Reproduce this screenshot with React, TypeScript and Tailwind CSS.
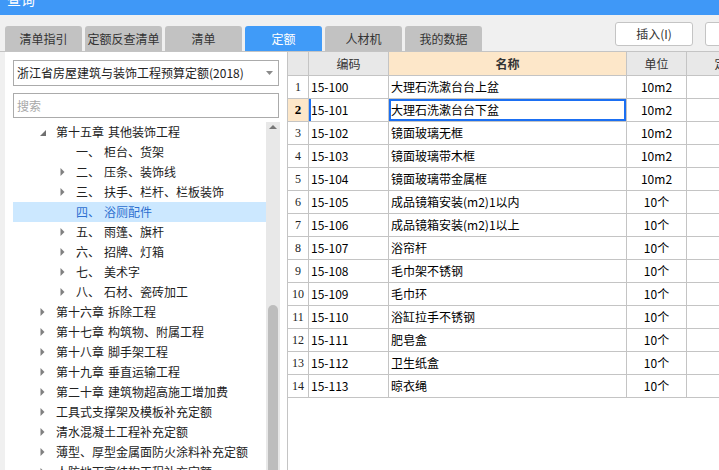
import React from 'react';

type Arrow = 'open' | 'closed' | 'none';

interface TreeItem {
  level: number;
  arrow: Arrow;
  head: string;
  tail?: string;
  selected?: boolean;
}

interface QuotaRow {
  code: string;
  name: string;
  unit: string;
}

const tabs = ['清单指引', '定额反查清单', '清单', '定额', '人材机', '我的数据'];

const tree: TreeItem[] = [
  { level: 0, arrow: 'open', head: '第十五章', tail: '其他装饰工程' },
  { level: 1, arrow: 'none', head: '一、', tail: '柜台、货架' },
  { level: 1, arrow: 'closed', head: '二、', tail: '压条、装饰线' },
  { level: 1, arrow: 'closed', head: '三、', tail: '扶手、栏杆、栏板装饰' },
  { level: 1, arrow: 'none', head: '四、', tail: '浴厕配件', selected: true },
  { level: 1, arrow: 'closed', head: '五、', tail: '雨篷、旗杆' },
  { level: 1, arrow: 'closed', head: '六、', tail: '招牌、灯箱' },
  { level: 1, arrow: 'closed', head: '七、', tail: '美术字' },
  { level: 1, arrow: 'closed', head: '八、', tail: '石材、瓷砖加工' },
  { level: 0, arrow: 'closed', head: '第十六章', tail: '拆除工程' },
  { level: 0, arrow: 'closed', head: '第十七章', tail: '构筑物、附属工程' },
  { level: 0, arrow: 'closed', head: '第十八章', tail: '脚手架工程' },
  { level: 0, arrow: 'closed', head: '第十九章', tail: '垂直运输工程' },
  { level: 0, arrow: 'closed', head: '第二十章', tail: '建筑物超高施工增加费' },
  { level: 0, arrow: 'closed', head: '工具式支撑架及模板补充定额' },
  { level: 0, arrow: 'closed', head: '清水混凝土工程补充定额' },
  { level: 0, arrow: 'closed', head: '薄型、厚型金属面防火涂料补充定额' },
  { level: 0, arrow: 'closed', head: '人防地下室结构工程补充定额' },
];

const rows: QuotaRow[] = [
  { code: '15-100', name: '大理石洗漱台台上盆', unit: '10m2' },
  { code: '15-101', name: '大理石洗漱台台下盆', unit: '10m2' },
  { code: '15-102', name: '镜面玻璃无框', unit: '10m2' },
  { code: '15-103', name: '镜面玻璃带木框', unit: '10m2' },
  { code: '15-104', name: '镜面玻璃带金属框', unit: '10m2' },
  { code: '15-105', name: '成品镜箱安装(m2)1以内', unit: '10个' },
  { code: '15-106', name: '成品镜箱安装(m2)1以上', unit: '10个' },
  { code: '15-107', name: '浴帘杆', unit: '10个' },
  { code: '15-108', name: '毛巾架不锈钢', unit: '10个' },
  { code: '15-109', name: '毛巾环', unit: '10个' },
  { code: '15-110', name: '浴缸拉手不锈钢', unit: '10个' },
  { code: '15-111', name: '肥皂盒', unit: '10个' },
  { code: '15-112', name: '卫生纸盒', unit: '10个' },
  { code: '15-113', name: '晾衣绳', unit: '10个' },
];

const TreeArrow = ({ kind }: { kind: Arrow }) => {
  if (kind === 'open') {
    return (
      <svg width="6" height="6" viewBox="0 0 6 6" className="mt-[1px]">
        <path d="M6 0 L6 6 L0 6 Z" fill="#707070" />
      </svg>
    );
  }
  if (kind === 'closed') {
    return (
      <svg width="5" height="8" viewBox="0 0 5 8">
        <path d="M0.5 0 L4.5 4 L0.5 8 Z" fill="#808080" />
      </svg>
    );
  }
  return null;
};

const TreeRow = ({ item }: { item: TreeItem }) => (
  <div
    className={
      'flex h-[20px] shrink-0 items-center whitespace-nowrap text-[12px] ' +
      (item.selected ? 'bg-[#cce8ff] text-[#2d6fd0]' : 'text-[#222]')
    }
  >
    <div className={item.level === 0 ? 'w-[43px] shrink-0 pl-[27px]' : 'w-[63px] shrink-0 pl-[47px]'}>
      <TreeArrow kind={item.arrow} />
    </div>
    <span>{item.head}</span>
    {item.tail && <span className="ml-[4px]">{item.tail}</span>}
  </div>
);

const LeftPanel = () => (
  <div className="flex h-full w-[282px] shrink-0 flex-col bg-white pl-[8px]">
    <div className="mt-[8px] flex h-[26px] w-[266px] items-center justify-between border border-[#ababab] pl-[3px] pr-[5px] text-[12px] text-[#222]">
      <span className="whitespace-nowrap">浙江省房屋建筑与装饰工程预算定额(2018)</span>
      <svg width="7" height="4" viewBox="0 0 7 4">
        <path d="M0 0 L7 0 L3.5 4 Z" fill="#8a8a8a" />
      </svg>
    </div>
    <div className="mt-[7px] flex h-[25px] w-[266px] items-center border border-[#ababab] pl-[3px] text-[12px] text-[#a8a8a8]">
      搜索
    </div>
    <div className="mt-[4px] flex min-h-0 flex-1 overflow-hidden">
      <div className="flex w-[253px] shrink-0 flex-col">
        {tree.map((item, i) => (
          <TreeRow key={i} item={item} />
        ))}
      </div>
      <div className="flex w-[14px] shrink-0 flex-col items-center bg-[#e8e8e8]">
        <svg width="8" height="4" viewBox="0 0 8 4" className="mt-[3px]">
          <path d="M0 4 L8 4 L4 0 Z" fill="#777" />
        </svg>
        <div className="mt-[176px] w-[10px] flex-1 rounded-t-full bg-[#bdbdbd]" />
      </div>
    </div>
  </div>
);

const QuotaTable = () => (
  <div className="flex h-full min-w-0 flex-1 flex-col overflow-hidden border-l border-[#c4c4c4] bg-white font-['Noto_Sans_CJK_SC',sans-serif] text-[12px] text-black">
    <div className="flex h-[24px] shrink-0 border-b border-[#c4c4c4]">
      <div className="w-[21px] shrink-0 border-r border-[#c4c4c4] bg-[#e8e8e8]" />
      <div className="flex w-[80px] shrink-0 items-center justify-center border-r border-[#c4c4c4] bg-[#e8e8e8] text-[#333]">
        编码
      </div>
      <div className="flex w-[238px] shrink-0 items-center justify-center border-r border-[#c4c4c4] bg-[#fde7c9] font-bold text-[#333]">
        名称
      </div>
      <div className="flex w-[60px] shrink-0 items-center justify-center border-r border-[#c4c4c4] bg-[#e8e8e8] text-[#333]">
        单位
      </div>
      <div className="flex w-[80px] shrink-0 items-center justify-center border-r border-[#c4c4c4] bg-[#e8e8e8] text-[#333]">
        定额
      </div>
    </div>
    {rows.map((row, i) => {
      const active = i === 1;
      return (
        <div key={row.code} className="flex h-[23px] shrink-0 border-b border-[#c4c4c4]">
          <div
            className={
              "flex w-[21px] shrink-0 items-center justify-center border-r border-[#c4c4c4] font-['Liberation_Serif',serif] " +
              (active ? 'bg-[#fde7c9] text-[13px] font-bold' : 'text-[12px] text-[#222]')
            }
          >
            {i + 1}
          </div>
          <div
            className={
              'flex w-[80px] shrink-0 items-center border-r border-[#c4c4c4] pl-[2px] ' +
              (active ? 'shadow-[inset_2px_0_0_#1b6ff2]' : '')
            }
          >
            {row.code}
          </div>
          <div
            className={
              'flex w-[238px] shrink-0 items-center whitespace-nowrap border-r border-[#c4c4c4] pl-[2px] ' +
              (active ? 'shadow-[inset_0_0_0_2px_#1b6ff2]' : '')
            }
          >
            {row.name}
          </div>
          <div className="flex w-[60px] shrink-0 items-center justify-center border-r border-[#c4c4c4]">
            {row.unit}
          </div>
          <div className="w-[80px] shrink-0 border-r border-[#c4c4c4]" />
        </div>
      );
    })}
  </div>
);

export default function App() {
  return (
    <div className="h-[470px] w-[719px] overflow-hidden bg-[#f0f0f0] font-['Noto_Sans_CJK_SC',sans-serif]">
      <div className="h-[15px] overflow-hidden bg-[#3f98f7]">
        <div className="-mt-[8px] ml-[7px] text-[14px] leading-[14px] text-white">查询</div>
      </div>

      <div className="flex h-[37px] border-b border-[#c4c4c4] pl-[5px]">
        <div className="flex items-end gap-[3px]">
          {tabs.map(tab => (
            <div
              key={tab}
              className={
                'flex h-[25px] w-[77px] shrink-0 items-center justify-center rounded-t-[3px] text-[12px] ' +
                (tab === '定额' ? 'bg-[#409bf8] text-white' : 'bg-[#c2c2c2] text-[#333]')
              }
            >
              {tab}
            </div>
          ))}
        </div>
        <div className="ml-[133px] mt-[7px] flex shrink-0 gap-[12px]">
          <button
            type="button"
            className="flex h-[24px] w-[78px] shrink-0 items-center justify-center rounded-[3px] border border-[#c4c4c4] bg-white text-[12px] text-[#333]"
          >
            插入(I)
          </button>
          <button
            type="button"
            aria-label="替换"
            className="h-[24px] w-[78px] shrink-0 rounded-[3px] border border-[#c4c4c4] bg-white"
          />
        </div>
      </div>

      <div className="flex h-[418px] pl-[5px]">
        <LeftPanel />
        <QuotaTable />
      </div>
    </div>
  );
}
